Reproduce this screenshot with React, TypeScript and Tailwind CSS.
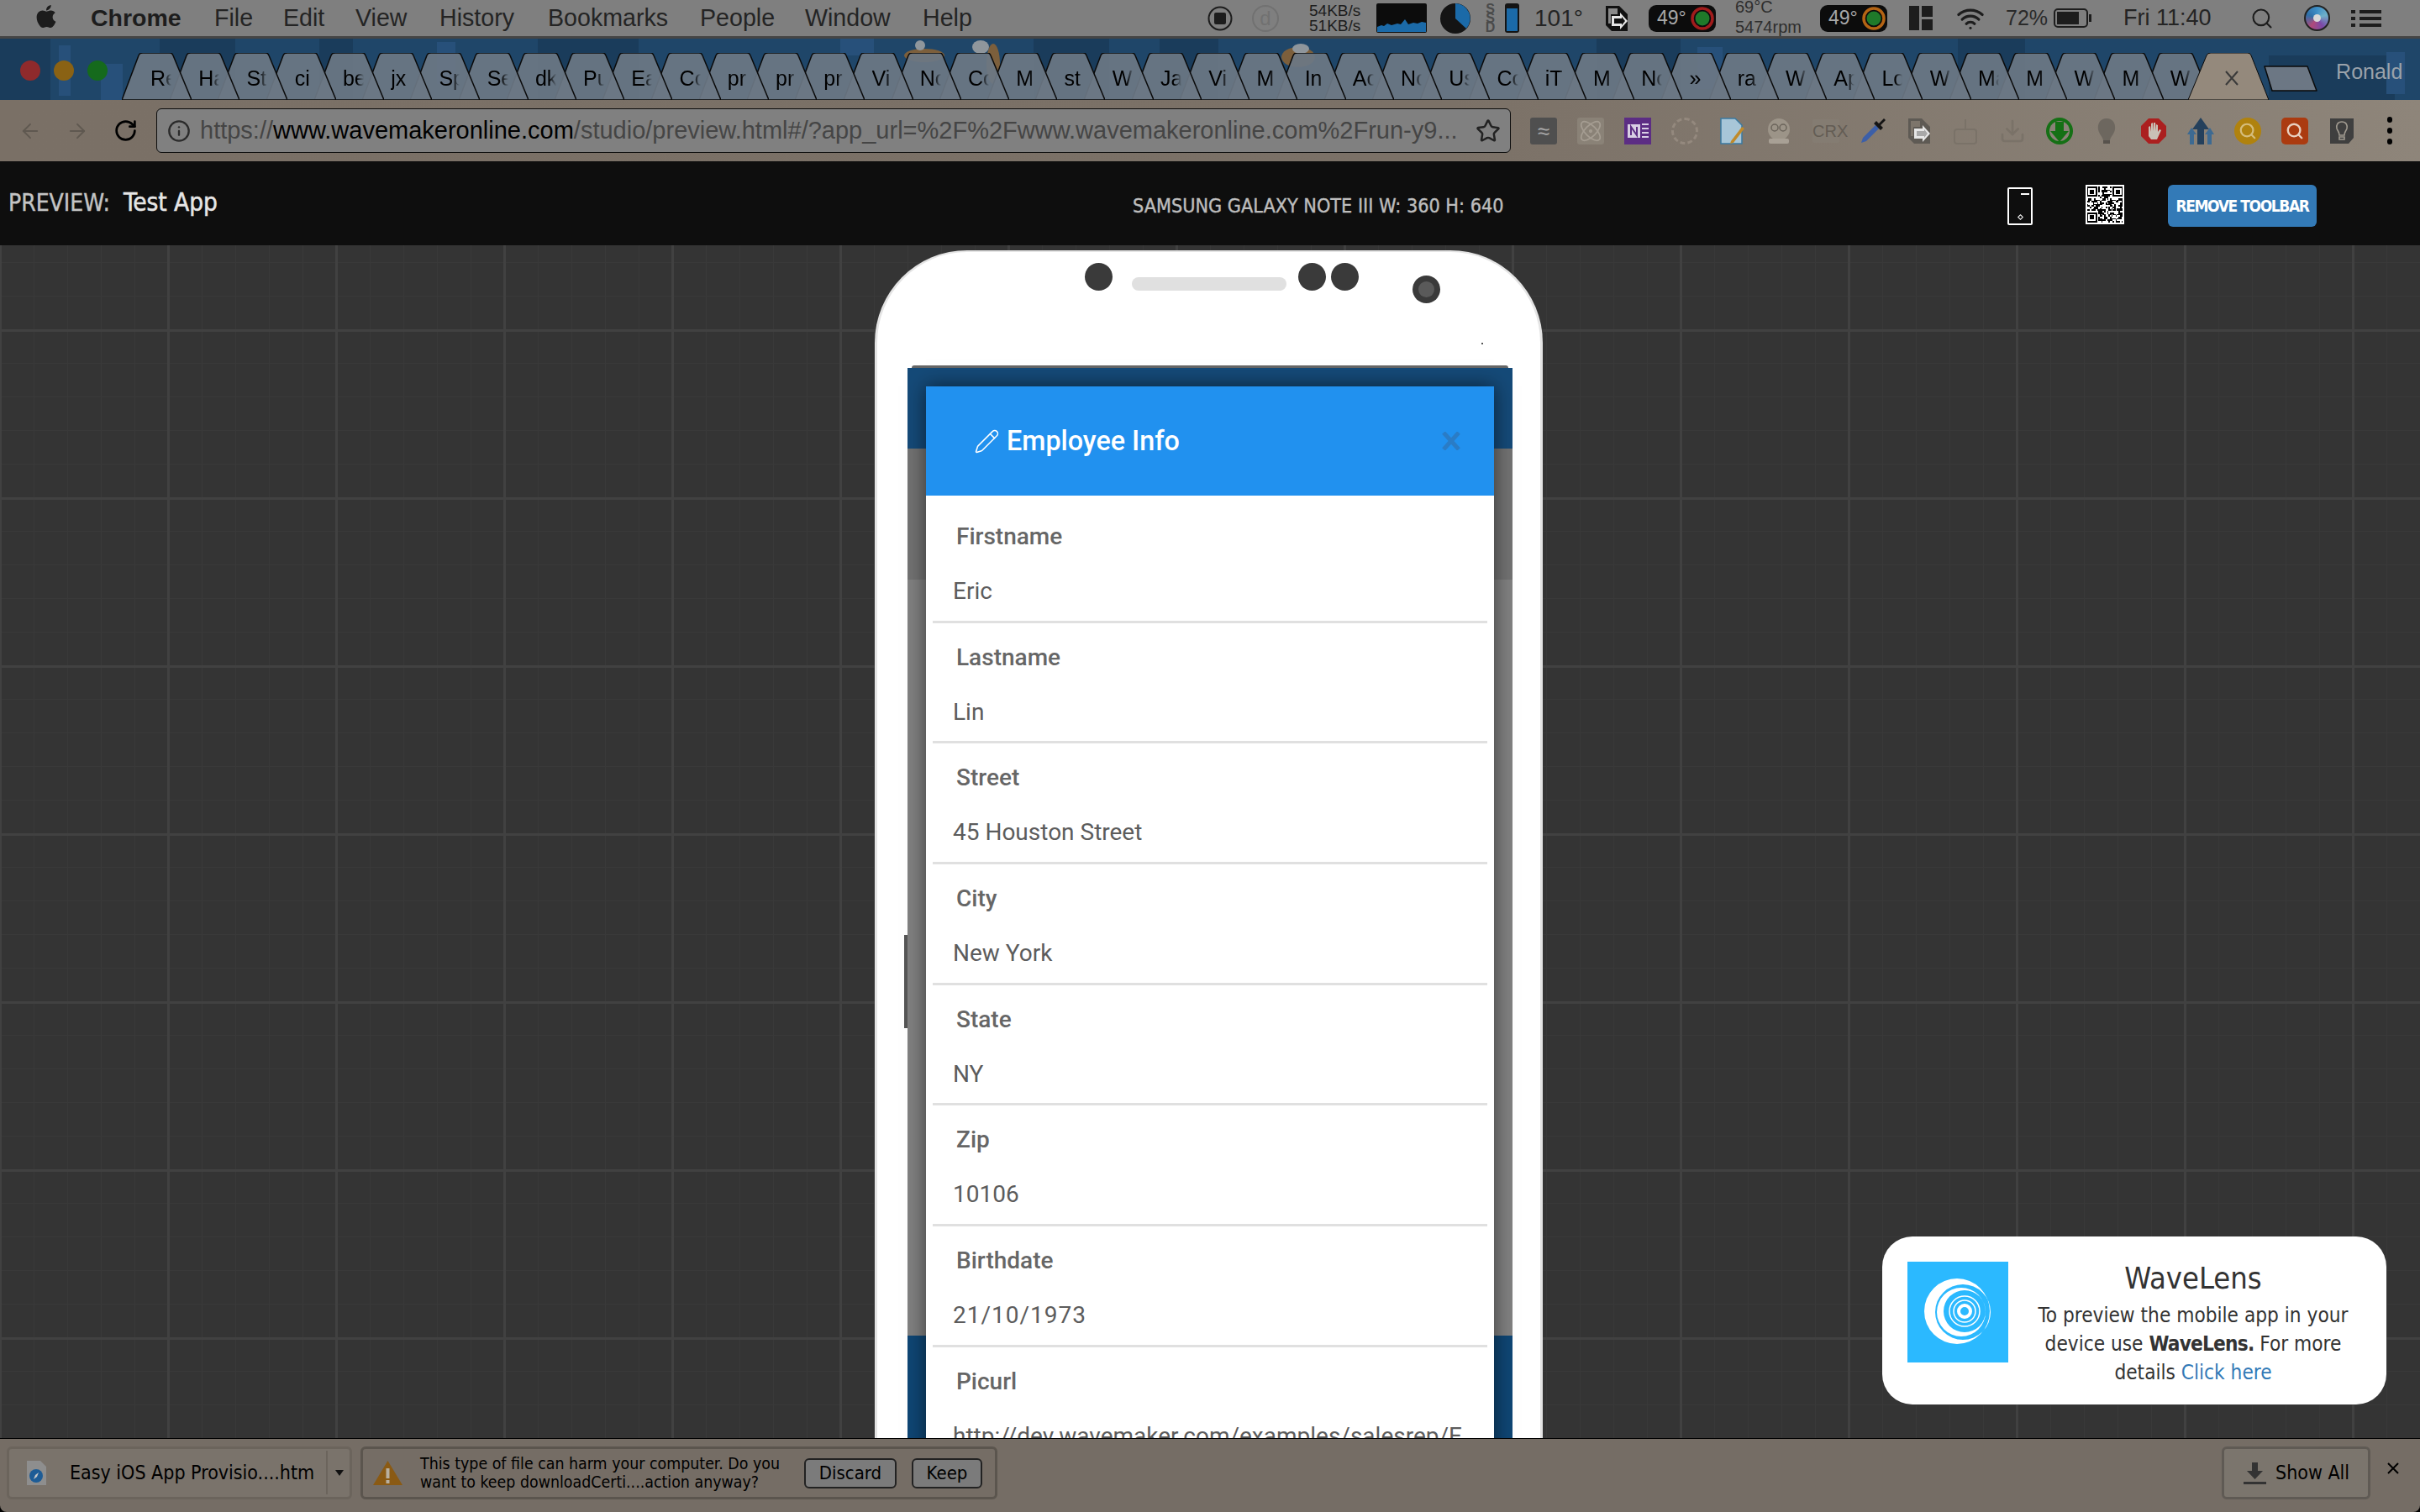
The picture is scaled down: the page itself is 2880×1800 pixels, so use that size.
import { ArrowLeft, ArrowRight, Atom, Download, Info, Pencil, RotateCw, Search, Star, Wifi } from "lucide-react";
import { FaApple } from "react-icons/fa";

const sans = "font-['Liberation_Sans',Arial,sans-serif]";
const lucida = "font-['DejaVu_Sans_Condensed','DejaVu_Sans',sans-serif]";
const roboto = "font-['Roboto',sans-serif]";

const menus = [
  { name: "File", width: "w-[82px]" },
  { name: "Edit", width: "w-[86px]" },
  { name: "View", width: "w-[100px]" },
  { name: "History", width: "w-[129px]" },
  { name: "Bookmarks", width: "w-[181px]" },
  { name: "People", width: "w-[125px]" },
  { name: "Window", width: "w-[140px]" },
  { name: "Help", width: "w-[60px]" },
];

const tabs = [
  "Re", "Ha", "St", "ci", "be", "jx", "Sp", "Se", "dk", "Pu", "Ea", "Co", "pr", "pr", "pr",
  "Vi", "No", "Co", "M", "st", "W", "Ja", "Vi", "M", "In", "Ac", "No", "Us", "Co", "iT", "M", "No",
  "»", "ra", "W", "Ap", "Lo", "W", "Ma", "M", "W", "M", "W",
];

const fields = [
  { label: "Firstname", value: "Eric" },
  { label: "Lastname", value: "Lin" },
  { label: "Street", value: "45 Houston Street" },
  { label: "City", value: "New York" },
  { label: "State", value: "NY" },
  { label: "Zip", value: "10106" },
  { label: "Birthdate", value: "21/10/1973", spaced: true },
  { label: "Picurl", value: "http://dev.wavemaker.com/examples/salesrep/Eric.png" },
];

// qr modules, seeded so the picture stays the same on every load
const qrCells: { x: number; y: number }[] = [];
let seed = 17;
for (let y = 0; y < 25; y++) {
  for (let x = 0; x < 25; x++) {
    seed = (seed * 73 + 41) % 1009;
    const inFinder = (x < 8 && y < 8) || (x > 16 && y < 8) || (x < 8 && y > 16);
    if (!inFinder && seed % 2 === 0) qrCells.push({ x, y });
  }
}

function Finder({ x, y }: { x: number; y: number }) {
  return (
    <g>
      <rect x={x} y={y} width="7" height="7" fill="#000" />
      <rect x={x + 1} y={y + 1} width="5" height="5" fill="#fff" />
      <rect x={x + 2} y={y + 2} width="3" height="3" fill="#000" />
    </g>
  );
}

function QrCode() {
  return (
    <svg viewBox="-1 -1 27 27" className="w-[46px] h-[47px] bg-white" shapeRendering="crispEdges">
      {qrCells.map((c) => (
        <rect key={`${c.x}-${c.y}`} x={c.x} y={c.y} width="1" height="1" fill="#000" />
      ))}
      <Finder x={0} y={0} />
      <Finder x={18} y={0} />
      <Finder x={0} y={18} />
    </svg>
  );
}

function DocArrow({ color = "#111", inner = "#8a8a8a", arrow = "#111" }: { color?: string; inner?: string; arrow?: string }) {
  return (
    <svg viewBox="0 0 30 32" className="w-[30px] h-[32px]">
      <path d="M2 1h16l10 10v20H9L2 24z" fill={color} />
      <path d="M5 4h11v7H8v11H5z" fill={inner} />
      <path d="M9 13h10v-4l9 10-9 10v-4H9z" fill="#e6e6e6" />
      <path d="M12 16h9v-2l4 5-4 5v-2h-9z" fill={arrow} />
    </svg>
  );
}

function TempBadge({ ring }: { ring: string }) {
  return (
    <div className="w-[80px] h-[32px] rounded-[9px] bg-[#0c0c0c] flex items-center pl-[10px] justify-between pr-[2px]">
      <span className={`${sans} text-[23px] text-[#a8a8a8] leading-none`}>49°</span>
      <svg viewBox="0 0 28 32" className="w-[28px] h-[32px]">
        <circle cx="14" cy="16" r="12" fill="none" stroke={ring} strokeWidth="3.5" />
        <circle cx="14" cy="16" r="8.5" fill="#1f7a2a" />
      </svg>
    </div>
  );
}

function MenuBar() {
  return (
    <div className={`${sans} h-[46px] shrink-0 bg-[#7f7f7f] border-b-[3px] border-[#454545] flex items-center text-[#242424] text-[28px]`}>
      <div className="w-[1437px] shrink-0 flex items-center">
        <div className="w-[255px] shrink-0 flex items-center gap-[40px] pl-[42px]">
          <FaApple className="w-[26px] h-[31px] text-[#1c1c1c] -mt-[4px]" />
          <span className="font-bold text-[28.5px] text-[#1d1d1d]">Chrome</span>
        </div>
        {menus.map((m) => (
          <span key={m.name} className={`${m.width} shrink-0 text-[28.6px]`}>{m.name}</span>
        ))}
      </div>
      <svg viewBox="0 0 30 30" className="w-[30px] h-[30px]">
        <circle cx="15" cy="15" r="13.5" fill="none" stroke="#1d1d1d" strokeWidth="2" />
        <rect x="8" y="8" width="14" height="14" rx="2" fill="#1d1d1d" />
      </svg>
      <div className="ml-[23px] w-[32px] h-[32px] rounded-full border-2 border-[#717171] text-[#717171] text-[24px] leading-none flex items-center justify-center">d</div>
      <div className="ml-[36px] w-[64px] text-[19px] leading-[18px] text-[#1d1d1d]">
        <div>54KB/s</div>
        <div>51KB/s</div>
      </div>
      <svg viewBox="0 0 60 35" className="ml-[16px] w-[60px] h-[35px] bg-[#0c0c0c] rounded-[2px]">
        <path d="M1 34V28l5-2 3 1 4-3 5 2 7-2 4 1 5-6 4 6 6-2 5 1 5-2 5 1v11z" fill="#1b6aa8" />
      </svg>
      <svg viewBox="0 0 36 36" className="ml-[16px] w-[36px] h-[36px]">
        <circle cx="18" cy="18" r="18" fill="#141414" />
        <path d="M18 18V0a18 18 0 0 1 13 30z" fill="#1b6aa8" />
      </svg>
      <div className="ml-[15px] w-[17px] flex flex-col items-center text-[#4a4a4a] text-[16px] leading-[11px] font-bold">
        <span>S</span>
        <span>S</span>
        <span>D</span>
      </div>
      <div className="ml-[9px] w-[17px] h-[35px] bg-[#141414] rounded-[3px] p-[2px] flex">
        <div className="flex-1 mt-[4px] bg-[#1b6aa8]" />
      </div>
      <span className="ml-[18px] w-[59px] text-[28px] whitespace-nowrap">101°</span>
      <div className="ml-[24px] w-[30px] flex"><DocArrow /></div>
      <div className="ml-[23px]"><TempBadge ring="#a11c1c" /></div>
      <div className="ml-[23px] w-[79px] text-[20px] leading-[24px] text-[#2e2e2e] whitespace-nowrap -mt-[3px]">
        <div>69°C</div>
        <div>5474rpm</div>
      </div>
      <div className="ml-[22px]"><TempBadge ring="#b46414" /></div>
      <div className="ml-[26px] w-[28px] h-[29px] flex gap-[3px]">
        <div className="w-[12px] bg-[#1d1d1d]" />
        <div className="flex-1 flex flex-col gap-[3px]">
          <div className="flex-1 bg-[#1d1d1d]" />
          <div className="flex-1 bg-[#1d1d1d]" />
        </div>
      </div>
      <Wifi className="ml-[24px] w-[42px] h-[34px] text-[#1d1d1d]" strokeWidth={2.2} />
      <span className="ml-[21px] w-[48px] text-[25px] text-[#2a2a2a]">72%</span>
      <div className="ml-[9px] w-[45px] h-[23px] flex items-center">
        <div className="w-[41px] h-[23px] rounded-[5px] border-2 border-[#1d1d1d] p-[2px]">
          <div className="w-[26px] h-full bg-[#1d1d1d]" />
        </div>
        <div className="w-[3px] h-[9px] ml-[1px] bg-[#1d1d1d]" />
      </div>
      <span className="ml-[38px] w-[107px] text-[27px] whitespace-nowrap">Fri 11:40</span>
      <Search className="ml-[44px] w-[28px] h-[30px] text-[#1d1d1d]" strokeWidth={1.8} />
      <div className="ml-[36px] w-[31px] h-[31px] rounded-full border-2 border-[#222] bg-[conic-gradient(#3d8fc7,#6fb0c8,#7a4aa8,#b04a7a,#2f6fa8,#3d8fc7)] flex items-center justify-center">
        <div className="w-[9px] h-[9px] rounded-full bg-[#d8d8d8]" />
      </div>
      <div className="ml-[25px] w-[36px] h-[20px] flex flex-col justify-between">
        {[0, 1, 2].map((i) => (
          <div key={i} className="flex gap-[5px]">
            <div className="w-[5px] h-[4px] bg-[#1d1d1d]" />
            <div className="flex-1 h-[4px] bg-[#1d1d1d]" />
          </div>
        ))}
      </div>
    </div>
  );
}

function ThemeArt() {
  return (
    <svg viewBox="0 0 2880 73" preserveAspectRatio="none" className="absolute inset-0 w-full h-full">
      <rect width="2880" height="73" fill="#1f4669" />
      <g fill="#1a3c5b">
        <rect x="0" y="0" width="60" height="73" />
        <rect x="190" y="0" width="90" height="73" />
        <rect x="380" y="0" width="40" height="73" />
        <rect x="640" y="0" width="120" height="73" />
        <rect x="1230" y="0" width="90" height="73" />
        <rect x="1380" y="0" width="70" height="73" />
        <rect x="1900" y="0" width="100" height="73" />
        <rect x="2330" y="0" width="80" height="73" />
        <rect x="2700" y="20" width="150" height="53" />
      </g>
      <g fill="#27507a">
        <rect x="70" y="8" width="14" height="60" />
        <rect x="120" y="30" width="26" height="43" />
        <rect x="520" y="4" width="22" height="50" />
        <rect x="1000" y="0" width="40" height="20" />
        <rect x="2020" y="10" width="30" height="50" />
        <rect x="2840" y="16" width="22" height="50" />
      </g>
      <g fill="#7c5f3c">
        <ellipse cx="1100" cy="20" rx="24" ry="8" />
        <ellipse cx="1182" cy="30" rx="8" ry="24" />
        <ellipse cx="1545" cy="22" rx="20" ry="12" />
      </g>
      <g fill="#8f969c">
        <ellipse cx="1095" cy="8" rx="6" ry="6" />
        <ellipse cx="1167" cy="10" rx="10" ry="8" />
        <ellipse cx="1548" cy="12" rx="10" ry="6" />
      </g>
    </svg>
  );
}

function Tab({ label, index }: { label: string; index: number }) {
  return (
    <div className="relative w-[83px] h-[56px] shrink-0 -mr-[25.77px]" style={{ zIndex: 60 - index }}>
      <svg viewBox="0 0 83 56" className="absolute inset-0 w-full h-full">
        <path d="M0 56 20 3Q21 0 25 0H57Q60 0 61 3L83 56Z" fill="#6c7784" fillOpacity="0.93" stroke="#0a0a0a" strokeWidth="1.5" />
      </svg>
      <div className="relative ml-[34px] w-[25px] pt-[16px] overflow-hidden whitespace-nowrap text-[25px] leading-[28px] text-black [mask-image:linear-gradient(90deg,#000_65%,transparent)]">
        {label}
      </div>
    </div>
  );
}

function TabStrip() {
  return (
    <div className={`${sans} relative h-[73px] shrink-0 flex items-end`}>
      <ThemeArt />
      <div className="relative flex gap-[16px] pl-[24px] mb-[23px]">
        <div className="w-[24px] h-[24px] rounded-full bg-[#8f2a2c]" />
        <div className="w-[24px] h-[24px] rounded-full bg-[#8a6214]" />
        <div className="w-[24px] h-[24px] rounded-full bg-[#156a1c]" />
      </div>
      <div className="relative flex items-end ml-[17px]">
        {tabs.map((t, i) => (
          <Tab key={i} label={t} index={i} />
        ))}
        <div className="relative z-[70] w-[96px] h-[56px] shrink-0 -ml-[2px]">
          <svg viewBox="0 0 96 56" className="absolute inset-0 w-full h-full">
            <path d="M0 56 22 3Q23 0 27 0H71Q74 0 75 3L96 56Z" fill="#94897c" stroke="#0a0a0a" strokeWidth="1" />
            <path d="M46 18 60 34M60 18 46 34" stroke="#3a3a3a" strokeWidth="2" transform="translate(-1 4)" fill="none" />
          </svg>
        </div>
        <svg viewBox="0 0 64 31" className="relative z-[5] w-[64px] h-[31px] -ml-[6px] mb-[10px]">
          <path d="M1 1H52L63 30H10Z" fill="#6c7784" stroke="#0a0a0a" strokeWidth="1.5" strokeLinejoin="round" />
        </svg>
      </div>
      <span className="relative ml-[22px] mb-[21px] text-[25px] leading-none text-[#9aa2aa]">Ronald</span>
    </div>
  );
}

function Extensions() {
  return (
    <div className="flex items-center gap-[24px] ml-[23px]">
      <div className="w-[32px] h-[32px] rounded-[3px] bg-[#4f4f4f] flex items-center justify-center text-[#a8a8a8] text-[26px] leading-none">≈</div>
      <div className="w-[32px] h-[32px] rounded-[3px] bg-[#8a8277] flex items-center justify-center"><Atom className="w-[30px] h-[30px] text-[#a59d92]" strokeWidth={1.4} /></div>
      <svg viewBox="0 0 32 32" className="w-[32px] h-[32px] bg-[#5c2d84]">
        <rect x="4" y="8" width="15" height="16" fill="#d8cfe4" />
        <path d="M8 21V11L15 21V11" fill="none" stroke="#5c2d84" strokeWidth="2" />
        <path d="M21 8h8M21 13h8M21 18h8M21 23h8" stroke="#d8cfe4" strokeWidth="2" />
      </svg>
      <div className="w-[32px] h-[32px] rounded-full border-[3px] border-dashed border-[#94897e]" />
      <svg viewBox="0 0 32 32" className="w-[32px] h-[32px]">
        <path d="M3 1H20L28 9V31H3Z" fill="#a8c6d8" stroke="#3a7aa0" strokeWidth="1.5" />
        <path d="M15 28 28 11 31 13 18 30 14 31Z" fill="#c08a2a" />
      </svg>
      <svg viewBox="0 0 32 32" className="w-[32px] h-[32px]">
        <ellipse cx="16" cy="14" rx="13" ry="13" fill="#9c9488" />
        <circle cx="11" cy="12" r="4" fill="none" stroke="#6b645b" strokeWidth="1.5" />
        <circle cx="21" cy="12" r="4" fill="none" stroke="#6b645b" strokeWidth="1.5" />
        <rect x="4" y="25" width="24" height="6" rx="2" fill="#a8a095" />
      </svg>
      <div className="w-[32px] h-[28px] rounded-[2px] bg-[#847c72] text-[#635c54] text-[20px] leading-[28px] text-center">CRX</div>
      <svg viewBox="0 0 32 32" className="w-[32px] h-[32px]">
        <path d="M2 30 4 24 19 9 23 13 8 28Z" fill="#3c5fa8" />
        <path d="M17 7 25 15 28 12 25 9 31 3 29 1 23 7 20 4Z" fill="#141414" />
      </svg>
      <DocArrow color="#5e5a54" inner="#7d756b" arrow="#a8a8a8" />
      <svg viewBox="0 0 32 32" className="w-[32px] h-[32px]" fill="none" stroke="#7a7268" strokeWidth="2">
        <rect x="3" y="14" width="26" height="17" rx="3" />
        <path d="M16 14V2" />
      </svg>
      <Download className="w-[32px] h-[34px] text-[#7a7268]" strokeWidth={2} />
      <svg viewBox="0 0 32 32" className="w-[32px] h-[32px]">
        <circle cx="16" cy="16" r="16" fill="#157015" />
        <circle cx="16" cy="16" r="12" fill="#8a8277" />
        <path d="M11 5H21V16H27L16 29 5 16H11Z" fill="#157015" />
      </svg>
      <svg viewBox="0 0 32 32" className="w-[32px] h-[32px]">
        <path d="M16 1C8 1 5 8 6 14 7 20 11 22 12 27H20C21 22 25 20 26 14 27 8 24 1 16 1Z" fill="#6d675f" />
        <rect x="12" y="27" width="8" height="4" fill="#57524c" />
      </svg>
      <svg viewBox="0 0 32 32" className="w-[32px] h-[32px]">
        <path d="M10 1H22L31 10V22L22 31H10L1 22V10Z" fill="#ab1f1f" />
        <path d="M10 22V11L12 10 13 17V7L15 6 16 16V6L18 6 19 16V8L21 9V17L23 14 25 15 20 26H13Z" fill="#c9c0b6" />
      </svg>
      <svg viewBox="0 0 32 32" className="w-[32px] h-[32px]" fill="#24405c">
        <path d="M16 0 26 14H20V32H12V14H6Z" />
        <path d="M5 12 11 20H8V32H3V20H0Z" fill="#3d6a92" />
        <path d="M27 12 32 20H29V32H24V20H21Z" fill="#3d6a92" />
      </svg>
      <div className="w-[32px] h-[32px] rounded-full bg-[#b0820e] flex items-center justify-center"><Search className="w-[22px] h-[22px] text-[#d5bd7c]" strokeWidth={2.4} /></div>
      <div className="w-[32px] h-[32px] rounded-[5px] bg-[#ab3b10] flex items-center justify-center"><Search className="w-[22px] h-[22px] text-[#e8d0c0]" strokeWidth={2.6} /></div>
      <svg viewBox="0 0 32 32" className="w-[32px] h-[32px]">
        <path d="M2 1H30V24L24 31H2Z" fill="#3f3f3f" />
        <path d="M16 5C11 5 9 9 10 13 11 16 13 17 13 21H19C19 17 21 16 22 13 23 9 21 5 16 5ZM13 23H19V26H13Z" fill="none" stroke="#a09a90" strokeWidth="1.6" />
      </svg>
      <div className="ml-[14px] flex flex-col gap-[6px]">
        {[0, 1, 2].map((i) => (
          <div key={i} className="w-[6px] h-[7px] rounded-full bg-black" />
        ))}
      </div>
    </div>
  );
}

function Toolbar() {
  return (
    <div className={`${sans} h-[73px] shrink-0 flex items-center pl-[22px] bg-[linear-gradient(90deg,#7a7066,#7b7167_60%,#8e857a)]`}>
      <ArrowLeft className="w-[28px] h-[28px] text-[#5f5850]" strokeWidth={1.6} />
      <ArrowRight className="ml-[28px] w-[28px] h-[28px] text-[#5f5850]" strokeWidth={1.6} />
      <RotateCw className="ml-[29px] w-[29px] h-[29px] text-black" strokeWidth={2.2} />
      <div className="ml-[22px] w-[1612px] h-[53px] shrink-0 rounded-[6px] border border-[#0d0d0d] bg-[#808080] flex items-center pl-[12px]">
        <Info className="w-[28px] h-[28px] text-[#2b2b2b]" strokeWidth={2} />
        <div className="ml-[11px] mt-[1px] w-[1504px] text-[29px] whitespace-nowrap overflow-hidden text-[#454545]">
          https://<span className="text-black">www.wavemakeronline.com</span>/studio/preview.html#/?app_url=%2F%2Fwww.wavemakeronline.com%2Frun-y9...
        </div>
        <Star className="ml-[14px] w-[30px] h-[30px] text-[#222]" strokeWidth={2} />
      </div>
      <Extensions />
    </div>
  );
}

function PreviewBar() {
  return (
    <div className={`${lucida} h-[100px] shrink-0 bg-[#0e0e0e] flex items-center`}>
      <div className="w-[1348px] shrink-0 pl-[10px] mt-[-1px] text-[28px] text-[#c4c4c4] whitespace-nowrap [-webkit-text-stroke:0.4px_#c4c4c4]">
        PREVIEW:<span className="ml-[16px] text-[29.5px] text-[#e6e6e6] [-webkit-text-stroke:0.5px_#e6e6e6]">Test App</span>
      </div>
      <div className="w-[1041px] shrink-0 mt-[7px] text-[23.2px] text-[#bdbdbd] whitespace-nowrap [-webkit-text-stroke:0.4px_#bdbdbd]">SAMSUNG GALAXY NOTE III W: 360 H: 640</div>
      <div className="w-[30px] h-[45px] border-2 border-white rounded-[2px] flex flex-col items-center justify-between py-[5px] mt-[7px]">
        <div className="w-[10px] h-[2px] bg-white self-end mr-[2px]" />
        <div className="w-[5px] h-[5px] border border-white rotate-45" />
      </div>
      <div className="ml-[63px] mt-[3px]"><QrCode /></div>
      <button className="ml-[52px] w-[177px] h-[50px] mt-[6px] rounded-[6px] bg-[#337ab7] text-white text-[19px] tracking-[-1.4px] font-bold whitespace-nowrap">REMOVE TOOLBAR</button>
    </div>
  );
}

function Field({ label, value, spaced }: { label: string; value: string; spaced?: boolean }) {
  return (
    <div className={`h-[143.7px] shrink-0 mx-[8px] pt-[23px] border-b-[3px] border-[#e0e0e0] text-[28px] leading-[36px] text-[#5c5c5c] ${roboto}`}>
      <div className="pl-[28px] font-medium text-[#666666]">{label}</div>
      <div className={`ml-[24px] mt-[29px] w-[606px] whitespace-nowrap overflow-hidden ${spaced ? "tracking-[1px]" : ""}`}>{value}</div>
    </div>
  );
}

function Phone() {
  return (
    <div className="relative w-[795px] h-[1500px] mt-[6px] ml-[1041px] bg-white rounded-t-[110px] border-x-[3px] border-t-2 border-[#e4e4e4] flex flex-col">
      <div className="h-[135px] shrink-0 flex items-start pt-[13px] pl-[247px]">
        <div className="w-[33px] h-[33px] rounded-full bg-[#3a3a3a]" />
        <div className="ml-[23px] mt-[17px] w-[184px] h-[16px] rounded-full bg-[#e0e0e0]" />
        <div className="ml-[14px] w-[33px] h-[33px] rounded-full bg-[#3a3a3a]" />
        <div className="ml-[6px] w-[33px] h-[33px] rounded-full bg-[#3a3a3a]" />
        <div className="ml-[64px] mt-[15px] w-[33px] h-[33px] rounded-full bg-[#3a3a3a] flex items-center justify-center">
          <div className="w-[19px] h-[19px] rounded-full bg-[#5a5a5a]" />
        </div>
        <div className="ml-[49px] mt-[95px] w-[2px] h-[2px] bg-[#555]" />
      </div>
      <div className="relative ml-[36px] mr-[33px] flex-1 flex flex-col">
        <div className="h-[3px] mx-[5px] rounded-t-[4px] bg-[#666]" />
        <div className="h-[96px] bg-[#154a78]" />
        <div className="h-[156px] bg-[#727272]" />
        <div className="h-[900px] bg-[#808080]" />
        <div className="flex-1 bg-[#0f4674]" />
        <div className="absolute left-[22px] top-[25px] w-[676px] h-[1400px] bg-white shadow-[0_0_22px_rgba(0,0,0,0.55)]">
          <div className={`${roboto} h-[130px] bg-[#2191ef] flex items-center pl-[57px] text-white`}>
            <Pencil className="w-[31px] h-[31px]" strokeWidth={1.2} />
            <span className="ml-[8px] w-[204px] whitespace-nowrap text-[32.3px] font-medium">Employee Info</span>
            <svg viewBox="0 0 22 22" className="ml-[314px] w-[22px] h-[22px]" stroke="#2a7cc6" strokeWidth="5" fill="none">
              <path d="M2 1 20 21M20 1 2 21" />
            </svg>
          </div>
          <div className="pt-[8px] flex flex-col">
            {fields.map((f) => (
              <Field key={f.label} label={f.label} value={f.value} spaced={f.spaced} />
            ))}
          </div>
        </div>
      </div>
      <div className="absolute left-[32px] top-[813px] w-[4px] h-[111px] bg-[#555]" />
    </div>
  );
}

function WaveLensCard() {
  return (
    <div className={`${lucida} absolute right-[40px] bottom-[40px] w-[600px] h-[200px] rounded-[36px] bg-white flex items-start pl-[30px] pt-[30px]`}>
      <svg viewBox="0 0 120 120" className="w-[120px] h-[120px] shrink-0 bg-[#2bb9ff]" fill="none" stroke="#fff">
        <path
          fillRule="evenodd"
          stroke="none"
          fill="#fff"
          d="M20 59a39 39 0 1 0 78 0a39 39 0 1 0 -78 0ZM33 60a33 33 0 1 0 66 0a33 33 0 1 0 -66 0Z"
        />
        <path
          fillRule="evenodd"
          stroke="none"
          fill="#fff"
          d="M35 60a29 29 0 1 0 58 0a29 29 0 1 0 -58 0ZM43 59a25 25 0 1 0 50 0a25 25 0 1 0 -50 0Z"
        />
        <circle cx="68" cy="59" r="18" strokeWidth="1.5" />
        <circle cx="68" cy="59" r="13" strokeWidth="1.5" />
        <circle cx="68" cy="59" r="7" strokeWidth="4" />
      </svg>
      <div className="ml-[20px] w-[400px] -mt-[2px] text-center text-[#333]">
        <div className="text-[36px] leading-[44px]">WaveLens</div>
        <div className="mt-[4.5px] text-[24.2px] leading-[34px]">
          To preview the mobile app in your device use <b className="tracking-[-0.8px]">WaveLens.</b> For more details <span className="text-[#337ab7]">Click here</span>
        </div>
      </div>
    </div>
  );
}

function DownloadBar() {
  return (
    <div className={`${lucida} h-[88px] shrink-0 border-t border-black rounded-b-[8px] bg-[#756d65] flex items-start pt-[9px] text-black`}>
      <div className="ml-[8px] w-[411px] h-[63px] rounded-[6px] border-[3px] border-[#6b645c] bg-[#7a736b] flex items-center pl-[20px]">
        <svg viewBox="0 0 25 31" className="w-[25px] h-[31px]">
          <path d="M1 1H17L24 8V30H1Z" fill="#8e8e8e" />
          <circle cx="12" cy="19" r="8" fill="#1d5c96" />
          <path d="M15 15 13 20 9 23 11 18Z" fill="#c9c9c9" />
        </svg>
        <span className="ml-[27px] w-[293px] text-[23px] whitespace-nowrap">Easy iOS App Provisio....htm</span>
        <div className="ml-[12px] h-[52px] border-l-2 border-[#6b645c] flex items-center pl-[9px] -mt-[1px]">
          <div className="w-0 h-0 border-x-[5px] border-x-transparent border-t-[7px] border-t-[#111]" />
        </div>
      </div>
      <div className="ml-[10px] w-[758px] h-[63px] rounded-[6px] border-[3px] border-[#5b554e] flex items-center pl-[12px]">
        <svg viewBox="0 0 35 29" className="w-[35px] h-[29px]">
          <path d="M17.5 0 35 29H0Z" fill="#8a5a14" />
          <rect x="15.5" y="9" width="4" height="12" fill="#b8b0a0" />
          <rect x="15.5" y="23" width="4" height="4" fill="#b8b0a0" />
        </svg>
        <div className="ml-[21px] w-[440px] text-[19.4px] leading-[22px] whitespace-nowrap">
          <div>This type of file can harm your computer. Do you</div>
          <div>want to keep downloadCerti....action anyway?</div>
        </div>
        <button className="ml-[17px] w-[110px] h-[36px] rounded-[6px] border-2 border-[#222] bg-[#7b7b7b] text-[22px] leading-none">Discard</button>
        <button className="ml-[18px] w-[84px] h-[36px] rounded-[6px] border-2 border-[#222] bg-[#7b7b7b] text-[22px] leading-none">Keep</button>
      </div>
      <div className="ml-auto w-[177px] h-[63px] rounded-[6px] border-[3px] border-[#5f5a54] bg-[#7b756d] flex items-center pl-[23px]">
        <svg viewBox="0 0 27 26" className="w-[27px] h-[26px]" fill="#333">
          <path d="M10 0H17V10H23L13.5 20 4 10H10Z" />
          <rect y="23" width="27" height="3" />
        </svg>
        <span className="ml-[11px] text-[23px] whitespace-nowrap">Show All</span>
      </div>
      <svg viewBox="0 0 14 14" className="ml-[20px] mr-[25px] mt-[19px] w-[14px] h-[14px]" stroke="#000" strokeWidth="2" fill="none">
        <path d="M1 1 13 13M13 1 1 13" />
      </svg>
    </div>
  );
}

export default function App() {
  return (
    <div className="w-[2880px] h-[1800px] overflow-hidden flex flex-col bg-black">
      <MenuBar />
      <TabStrip />
      <Toolbar />
      <PreviewBar />
      <div className="relative flex-1 overflow-hidden bg-[#343434] bg-[image:linear-gradient(to_right,#414141_3px,transparent_3px),linear-gradient(to_bottom,#414141_3px,transparent_3px),linear-gradient(to_right,#393939_1px,transparent_1px),linear-gradient(to_bottom,#393939_1px,transparent_1px)] bg-[size:200px_200px,200px_200px,40px_40px,40px_40px] bg-[position:-1px_0,0_100px,0_0,0_20px]">
        <Phone />
        <WaveLensCard />
      </div>
      <DownloadBar />
    </div>
  );
}
